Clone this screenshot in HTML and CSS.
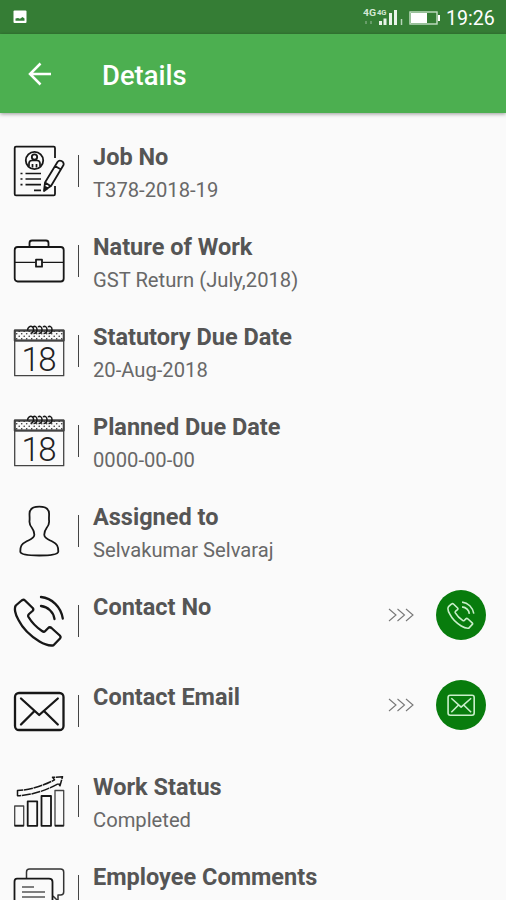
FILE: index.html
```html
<!DOCTYPE html>
<html lang="en">
<head>
<meta charset="utf-8">
<title>Details</title>
<link rel="stylesheet" href="styles.css">
</head>
<body>
<svg width="0" height="0" class="defs">
  <defs>
    <pattern id="dots" width="5" height="5" patternUnits="userSpaceOnUse"><circle cx="1.2" cy="1.2" r=".8" fill="#333"/><circle cx="3.7" cy="3.7" r=".8" fill="#333"/></pattern>
    <symbol id="calendar" viewBox="0 0 52 52">
      <rect x="1.7" y="5.5" width="49" height="10" fill="url(#dots)"/>
      <path d="M1.7 5.5h49v45.2h-49zM1.7 15.7h49" stroke="#444" stroke-width="1.3"/>
      <path d="M14.500 5.500c0-3 3-5.500 5-3.500s1 6-2 6.500M20 2c2-1.500 4 0 4 2.500s-1.500 4-3.500 4M25 2c2-1.500 4 0 4 2.500s-1.500 4-3.500 4M30 2c2-1.500 4 0 4 2.500s-1.500 4-3.500 4M35 2c2-1.500 4 0 4 2.500s-1.500 4-3.500 4" stroke-width="1.5"/>
      <text x="8.500" y="46" class="day" textLength="35">18</text>
    </symbol>
    <symbol id="phone" viewBox="0 0 52 52">
      <path d="M8 6 2.800 10.500C1 13 2 19 5.500 25c4 8 12 16 21 21.500 5 3 10 4.500 14 3.800L47 43.500c.8-1 .8-2-.2-3L38.500 33c-1.200-1-2.500-.8-3.500.2l-3 3c-.8.8-2 .5-3-.2C23 32 18.500 27 15.500 22c-.8-1.500-.5-2 .5-3l3.500-3c1-1 1-2 .2-3L12 5.500c-1.200-1.200-2.700-.8-4 .5z"/>
      <path d="M28 2c11 1 20 10 21.800 21.500M28 11c7 1 12.500 6 13.500 13"/>
    </symbol>
    <symbol id="mail" viewBox="0 0 52 52">
      <rect x="2" y="8" width="48.500" height="37" rx="4"/>
      <path d="M8 13.500 26.200 30 44.800 13.500M8 39.500 21 26.500M44.800 39.500 31.500 26.500"/>
    </symbol>
    <symbol id="arrows" viewBox="0 0 26 14"><path d="M1 1l7 6-7 6M9.500 1l7 6-7 6M18 1l7 6-7 6"/></symbol>
  </defs>
</svg>
<header class="status">
  <svg class="photo" viewBox="0 0 14 14"><rect x=".5" y=".5" width="13" height="12.500" rx="1" fill="#fff"/><path d="M2.500 10.800V8.500L5 8l2 .7L9.500 7l2 1.500v2.300z" fill="#337d36"/></svg>
  <svg class="signal" viewBox="0 0 42 18"><text x="0" y="8" class="net" textLength="13" lengthAdjust="spacingAndGlyphs">4G</text><text x="14" y="7" class="net small" textLength="9.500" lengthAdjust="spacingAndGlyphs">4G</text>
    <path d="M3 13v3M8 13v3" stroke="#79a87b" stroke-width="1.500"/><path d="M17.500 13v4M22 10.500V17M27.500 5v12M32.500 2v15" stroke="#e9f4e9" stroke-width="3"/><path d="M38.500 11v6" stroke="#b8d5b9" stroke-width="1.500"/></svg>
  <svg class="battery" viewBox="0 0 32 14"><rect x="1" y="1" width="27" height="12" fill="none" stroke="#c5dfc6" stroke-width="1.400"/><path d="M2 2h16v10H2z" fill="#fff"/><path d="M29 4h2v6h-2z" fill="#fff"/></svg>
  <span class="clock">19:26</span>
</header>
<nav class="toolbar">
  <svg class="back" viewBox="0 0 24 24"><path d="M23 12H2M12.500 1.500 2 12l10.500 10.500"/></svg>
  <h1>Details</h1>
</nav>
<main>
  <section class="row">
    <svg class="icon" viewBox="0 0 52 52">
      <path d="M42 13V3q0-1.300-1.300-1.300H3Q1.700 1.700 1.700 3v46q0 1.400 1.300 1.400h37.700q1.300 0 1.300-1.400V41"/>
      <circle cx="21.500" cy="15.500" r="8.700"/><path d="M16 21.500v-3q0-3 3-3h5q3 0 3 3v3M19.500 19v3.500M23.500 19v3.500" stroke-width="1.700"/><circle cx="21.500" cy="12" r="2.700"/>
      <path d="M12.500 28.500H28M12.500 34H28M12.500 39.700H28M21 45.300h7M7.500 28.500h2M7.500 34h2M7.500 39.700h2" stroke-width="1.700"/>
      <path d="m31 45.500 1-8L44.500 17c2-3 7-.5 6 3L38 41l-7 4.500ZM42 21l6 3.500M32 37.500l5.500 3.500M31 46l1.500-4 2 1.500z"/>
    </svg>
    <div class="copy"><h2>Job No</h2><p>T378-2018-19</p></div>
  </section>
  <section class="row">
    <svg class="icon" viewBox="0 0 52 52"><rect x="1.700" y="12" width="49" height="34.500" rx="3"/><path d="M16.500 12V8q0-2.500 2.500-2.500h14q2.500 0 2.500 2.500v4"/><path d="M2 27.300h20.500M29.500 27.300h21" stroke-width="1.300"/><rect x="23" y="24.700" width="6" height="7"/></svg>
    <div class="copy"><h2>Nature of Work</h2><p>GST Return (July,2018)</p></div>
  </section>
  <section class="row">
    <svg class="icon"><use href="#calendar"/></svg>
    <div class="copy"><h2>Statutory Due Date</h2><p>20-Aug-2018</p></div>
  </section>
  <section class="row">
    <svg class="icon"><use href="#calendar"/></svg>
    <div class="copy"><h2>Planned Due Date</h2><p>0000-00-00</p></div>
  </section>
  <section class="row">
    <svg class="icon" viewBox="0 0 52 52"><path d="M26.300 1.700C20 1.700 16.500 4 16.500 9c0 3 .3 4 0 7-.3 3 .8 5 2.500 7 1.800 2.500 2.500 4 2.300 7-.2 3.500-4 4.500-8 6.500C8.500 39 7.300 41 7.300 46.500c0 3 9 4 19 4s19-1 19-4c0-5.500-1.200-7.500-6-10-4-2-7.800-3-8-6.500-.2-3 .5-4.500 2.300-7 1.700-2 2.800-4 2.500-7-.3-3 0-4 0-7 0-5-3.500-7.300-9.800-7.300z"/></svg>
    <div class="copy"><h2>Assigned to</h2><p>Selvakumar Selvaraj</p></div>
  </section>
  <section class="row">
    <svg class="icon bold"><use href="#phone"/></svg>
    <div class="copy"><h2>Contact No</h2></div>
    <svg class="arrows"><use href="#arrows"/></svg>
    <a class="action"><svg><use href="#phone"/></svg></a>
  </section>
  <section class="row">
    <svg class="icon bold"><use href="#mail"/></svg>
    <div class="copy"><h2>Contact Email</h2></div>
    <svg class="arrows"><use href="#arrows"/></svg>
    <a class="action"><svg><use href="#mail"/></svg></a>
  </section>
  <section class="row">
    <svg class="icon" viewBox="0 0 52 52"><path d="M14.700 26.300h9.500v24.500h-9.500zM28.500 21h9.500v29.800h-9.500z"/><path d="M1.700 31h9v19.800h-9zM42 15.500h8.700v35.300H42z" stroke="#444" stroke-width="1.300"/><path d="M1.700 50.700h9M42 50.700h8.700"/><path d="M4.500 15.500v5.300C20 20 34 15 45.500 8.500l1.500 2.300 2.500-9-10 .5 2 2.500C31 10.500 17 15 4.500 15.500z" stroke-width="1.500" stroke-dasharray="9 .7"/></svg>
    <div class="copy"><h2>Work Status</h2><p>Completed</p></div>
  </section>
  <section class="row">
    <svg class="icon" viewBox="0 0 52 52"><path d="M13.500 13V7q0-3 3-3h31q3.200 0 3.200 3v20q0 3-3.200 3H45v6l-5-5" stroke="#333" stroke-width="1.500"/><path d="M4 13.700h32q3.500 0 3.500 3V38q0 3-3.500 3H17l-7 7v-7H4q-2.500 0-2.500-3V16.700q0-3 2.500-3z"/><path d="M9 22h12M9 27h23M9 32h23" stroke="#555" stroke-width="1.600"/></svg>
    <div class="copy"><h2>Employee Comments</h2></div>
  </section>
</main>
</body>
</html>
```

FILE: styles.css
```css
* { box-sizing: border-box; }
body { margin: 0; height: 900px; overflow: hidden; display: flex; flex-direction: column; background: #fafafa; font-family: Roboto, sans-serif; }
h1, h2, p { margin: 0; }
.defs { position: absolute; }
.status { flex: none; height: 34px; background: #357d35; display: flex; align-items: center; padding: 0 11px 0 13px; color: #fff; }
.photo { width: 14px; height: 14px; }
.signal { width: 42px; height: 18px; margin-left: auto; }
.net { font: bold 9px Roboto, sans-serif; fill: #d4e7d4; }
.net.small { font-size: 7px; }
.battery { width: 32px; height: 14px; margin: 1px 5px 0 4px; }
.clock { font-size: 19.6px; line-height: 34px; padding-top: 3px; width: 49px; white-space: nowrap; }
.toolbar { flex: none; height: 79px; background: #4caf50; color: #fff; display: flex; align-items: center; padding: 3px 28px 0; box-shadow: 0 1px 4px rgba(0, 0, 0, .4); }
.back { width: 24px; height: 24px; margin-top: -3px; fill: none; stroke: #fff; stroke-width: 2.5; }
.toolbar h1 { margin-left: 50px; padding-top: 1px; font-size: 27.4px; font-weight: 500; line-height: 34px; }
main { padding-top: 13px; }
.row { height: 90px; padding: 0 20px 0 13px; display: flex; align-items: center; }
.icon { flex: none; width: 52px; height: 52px; fill: none; stroke: #171717; stroke-width: 1.8; stroke-linejoin: round; }
.icon.bold { stroke-width: 2.3; stroke-linecap: round; }
.day { font: 300 33px Roboto, sans-serif; fill: #222; stroke: none; }
.copy { flex: 1; height: 62px; margin-left: 28px; position: relative; white-space: nowrap; }
.copy::before { content: ""; position: absolute; left: -15px; top: 15px; width: 1px; height: 32px; background: #444; }
.copy h2 { font-size: 23.5px; line-height: 34px; font-weight: 700; color: #555; }
.copy p { font-size: 20.2px; line-height: 30px; margin-top: 1px; font-weight: 400; color: #686868; }
.arrows { flex: none; width: 26px; height: 14px; margin: -12px 22px 0 0; fill: none; stroke: #777; stroke-width: 1.1; }
.action { flex: none; width: 50px; height: 50px; margin-top: -12px; border-radius: 50%; background: #087c0d; display: flex; align-items: center; justify-content: center; }
.action svg { width: 28px; height: 28px; fill: none; stroke: #c9efca; stroke-width: 3; stroke-linejoin: round; }
```
